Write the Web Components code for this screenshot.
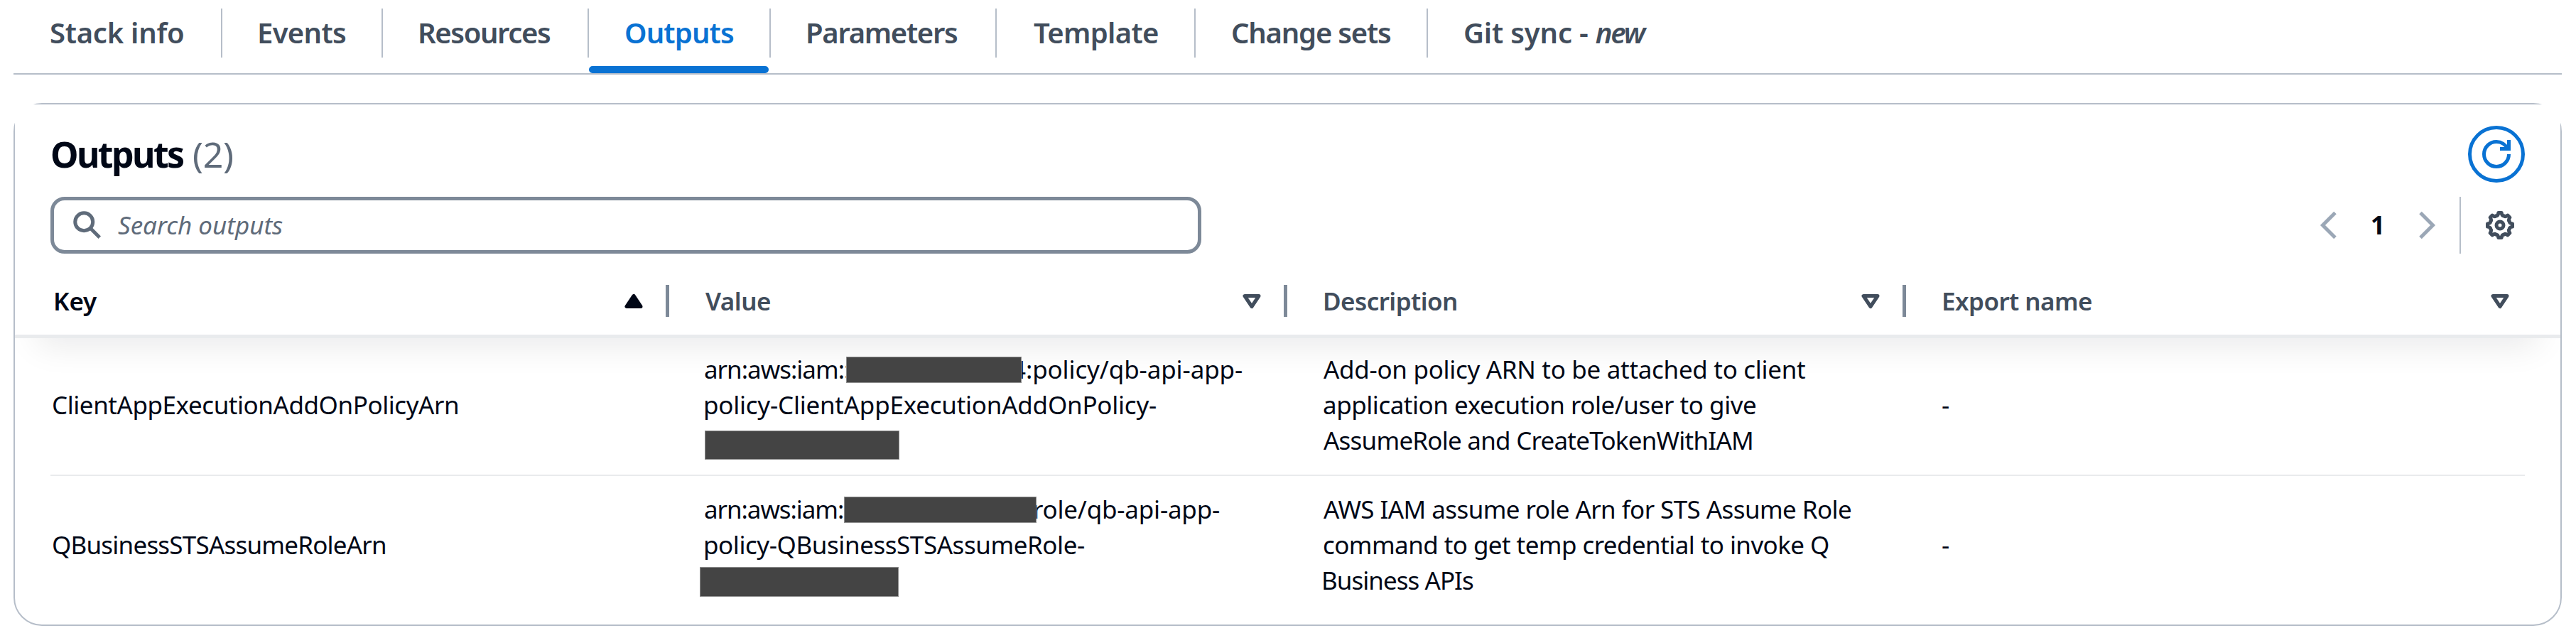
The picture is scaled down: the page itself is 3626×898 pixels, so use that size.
<!DOCTYPE html>
<html lang="en">
<head>
<meta charset="utf-8">
<title>Stack outputs</title>
<style>
html,body{margin:0;background:#fff;overflow:hidden}
body{width:3626px;height:898px;font-family:"Noto Sans","Open Sans",sans-serif;font-size:35px;font-weight:450;line-height:50px;color:#000716}
</style>
</head>
<body>
<cfn-tabs></cfn-tabs>
<outputs-panel></outputs-panel>
<script>
const ctx = document.createElement('canvas').getContext('2d');
const mount = (el, html) => { el.attachShadow({mode:'open'}).innerHTML = html; };

/* One line of text, tracked so that its ink spans the given width. */
customElements.define('ui-text', class extends HTMLElement {
  connectedCallback() {
    if (this.shadowRoot) return;
    mount(this, `<style>:host{display:block;white-space:pre}</style><span><slot></slot></span>`);
    const cs = getComputedStyle(this), s = this.textContent, want = +this.getAttribute('ink');
    ctx.font = `${cs.fontStyle} ${cs.fontWeight} ${cs.fontSize} ${cs.fontFamily}`;
    const m = ctx.measureText(s), ink = m.actualBoundingBoxLeft + m.actualBoundingBoxRight;
    const span = this.shadowRoot.querySelector('span');
    span.style.marginLeft = m.actualBoundingBoxLeft + 'px';
    if (want && s.length > 1) span.style.letterSpacing = (want - ink) / (s.length - 1) + 'px';
  }
});

/* Eight flat teeth joined by concave valleys. */
const gearPath = () => {
  const p = (deg, r) => { const a = deg * Math.PI / 180; return (8 + r * Math.sin(a)).toFixed(2) + ' ' + (8 - r * Math.cos(a)).toFixed(2); };
  let d = 'M' + p(-7, 7.05);
  for (let k = 0; k < 8; k++) d += 'L' + p(k * 45 + 7, 7.05) + 'Q' + p(k * 45 + 13, 5.3) + ' ' + p(k * 45 + 22.5, 5.75) + 'Q' + p(k * 45 + 32, 5.3) + ' ' + p(k * 45 + 38, 7.05);
  return d + 'z';
};
const ICONS = {
  refresh:'<path d="M15 0v5h-5M15 8c0 3.87-3.13 7-7 7s-7-3.13-7-7 3.13-7 7-7c2.79 0 5.2 1.63 6.33 4"/>',
  search:'<circle cx="6.1" cy="6.1" r="5"/><path d="m9.6 9.6 5.3 5.3"/>',
  left:'<path d="m12 1-7 7 7 7"/>',
  right:'<path d="m4 1 7 7-7 7"/>',
  down:'<path stroke-linejoin="round" d="M4 5h8l-4 6z"/>',
  up:'<path stroke-linejoin="round" fill="currentColor" d="M4 11h8L8 5z"/>',
  gear:'<circle cx="8" cy="8" r="2"/><path stroke-linejoin="round" d="' + gearPath() + '"/>'
};
customElements.define('ui-icon', class extends HTMLElement {
  connectedCallback() {
    if (this.shadowRoot) return;
    mount(this, `<style>:host{display:block;width:40px;height:40px;flex:none}svg{display:block;overflow:visible}</style>
    <svg width="40" height="40" viewBox="0 0 16 16" fill="none" stroke="currentColor" stroke-width="2">${ICONS[this.getAttribute('name')]}</svg>`);
  }
});

customElements.define('cfn-tab', class extends HTMLElement {
  connectedCallback() {
    mount(this, `<style>
    :host{display:block;height:91px;padding-top:12px;box-sizing:border-box;position:relative;color:#414d5c;font-weight:650;font-size:40px}
    .in{display:flex;height:69px;box-sizing:border-box;border-right:2px solid #b6bec9;padding:9px 0 0 52px}
    :host([last]) .in{border:0}
    :host([active]){color:#0972d3}
    :host([active])::after{content:"";position:absolute;left:0;right:3px;top:93px;height:10px;background:#0972d3;border-radius:5px}
    </style><div class="in"><slot></slot></div>`);
  }
});

customElements.define('cfn-tabs', class extends HTMLElement {
  connectedCallback() {
    mount(this, `<style>
    :host{display:flex;box-sizing:border-box;height:105px;margin:0 20px 0 19px;border-bottom:2px solid #b6bec9}
    .new{font-style:italic;margin-left:10px}
    </style>
    <cfn-tab style="width:294px"><ui-text ink="187">Stack info</ui-text></cfn-tab>
    <cfn-tab style="width:226px"><ui-text ink="121">Events</ui-text></cfn-tab>
    <cfn-tab style="width:290px"><ui-text ink="183">Resources</ui-text></cfn-tab>
    <cfn-tab style="width:256px" active><ui-text ink="151">Outputs</ui-text></cfn-tab>
    <cfn-tab style="width:318px"><ui-text ink="210">Parameters</ui-text></cfn-tab>
    <cfn-tab style="width:280px"><ui-text ink="175">Template</ui-text></cfn-tab>
    <cfn-tab style="width:327px"><ui-text ink="222">Change sets</ui-text></cfn-tab>
    <cfn-tab last><ui-text ink="173">Git sync -</ui-text><ui-text class="new" ink="73">new</ui-text></cfn-tab>`);
  }
});

customElements.define('search-field', class extends HTMLElement {
  connectedCallback() {
    mount(this, `<style>
    :host{display:flex;align-items:center;box-sizing:border-box;width:1620px;height:80px;border:5px solid #7d8998;border-radius:20px;padding-left:27px;color:#5f6b7a;font-style:italic}
    ui-text{margin:0 0 1px 23px}
    </style><ui-icon name="search"></ui-icon><ui-text ink="232">Search outputs</ui-text>`);
  }
});

customElements.define('refresh-button', class extends HTMLElement {
  connectedCallback() {
    mount(this, `<style>:host{display:flex;align-items:center;justify-content:center;box-sizing:border-box;width:80px;height:80px;border:5px solid #0972d3;border-radius:50%;color:#0972d3}</style><ui-icon name="refresh"></ui-icon>`);
  }
});

customElements.define('page-controls', class extends HTMLElement {
  connectedCallback() {
    mount(this, `<style>
    :host{display:flex;align-items:center;height:80px;color:#9ba7b6}
    .n{width:100px;color:#000716;font-weight:700}
    .n ui-text{margin:0 0 0 42px}
    .bar{width:2px;height:80px;background:#b6bec9;margin:0 35px 0 25px}
    .gear{color:#414d5c;margin-right:15px}
    </style><ui-icon name="left"></ui-icon><div class="n"><ui-text>1</ui-text></div><ui-icon name="right"></ui-icon><div class="bar"></div><ui-icon class="gear" name="gear"></ui-icon>`);
  }
});

customElements.define('column-head', class extends HTMLElement {
  connectedCallback() {
    mount(this, `<style>
    :host{display:flex;align-items:center;justify-content:space-between;height:45px;box-sizing:border-box;border-right:5px solid #7d8998;padding:0 25px 0 51px;color:#414d5c;font-weight:650}
    :host([sorted]){color:#000716;padding-left:7px}
    :host([last]){border:0;padding-right:14px}
    ui-icon{margin-top:1px}
    </style><slot></slot><ui-icon name="${this.hasAttribute('sorted')?'up':'down'}"></ui-icon>`);
  }
});

customElements.define('redacted-bar', class extends HTMLElement {
  connectedCallback() {
    mount(this, `<style>:host{display:block;position:absolute;box-sizing:border-box;background:#444;border:1px solid #8e8e8e}</style>`);
  }
});

customElements.define('output-row', class extends HTMLElement {
  connectedCallback() {
    mount(this, `<style>
    :host{display:grid;grid-template-columns:871px 871px 871px 870px;align-items:center;margin:0 50px;position:relative}
    ::slotted(div){padding-left:50px;position:relative}
    ::slotted(div:first-child){padding-left:4px}
    </style><slot></slot>`);
  }
});

customElements.define('outputs-panel', class extends HTMLElement {
  connectedCallback() {
    mount(this, `<style>
    :host{display:block;box-sizing:border-box;margin:40px 20px 0 19px;height:736px;border:2px solid #b6bec9;border-radius:40px}
    .head{position:relative;z-index:0;background:#fff;height:324px;border-bottom:5px solid #e9ebed;box-sizing:content-box}
    .title{display:flex;justify-content:space-between;padding:30px 50px 0 52px;height:80px;font-size:50px;line-height:80px}
    .title b{display:flex;font-weight:700}
    .count{color:#5f6b7a;font-weight:450}
    .tools{display:flex;justify-content:space-between;padding:20px 50px 0 50px}
    .cols{display:grid;grid-template-columns:871px 870px 871px 870px;padding:44px 0 0 50px}
    .body{position:relative}
    .shade{position:absolute;inset:0 0 auto 0;height:80px;overflow:hidden}
    .shade::before{content:"";position:absolute;left:32px;right:32px;top:-60px;height:60px;box-shadow:0 10px 48px rgba(0,7,22,.09)}
    .r1{height:192px;border-bottom:2px solid #e9ebed}
    .r2{height:204px}
    .r1>div{margin-top:-5px}
    .r2>div{margin-top:-11px}
    .line{display:flex}
    </style>
    <div class="head">
      <div class="title"><b><ui-text ink="185" style="width:200px">Outputs</ui-text><ui-text class="count" ink="54">(2)</ui-text></b><refresh-button></refresh-button></div>
      <div class="tools"><search-field></search-field><page-controls></page-controls></div>
      <div class="cols">
        <column-head sorted><ui-text ink="59">Key</ui-text></column-head>
        <column-head><ui-text ink="91">Value</ui-text></column-head>
        <column-head style="padding-left:53px"><ui-text ink="185">Description</ui-text></column-head>
        <column-head last style="padding-left:53px"><ui-text ink="208">Export name</ui-text></column-head>
      </div>
    </div>
    <div class="body"><div class="shade"></div>
      <output-row class="r1">
        <div><ui-text ink="569">ClientAppExecutionAddOnPolicyArn</ui-text></div>
        <div>
          <div class="line"><ui-text ink="203" style="width:432px">arn:aws:iam::</ui-text><ui-text ink="324">4:policy/qb-api-app-</ui-text></div>
          <ui-text ink="635">policy-ClientAppExecutionAddOnPolicy-</ui-text>
          <div style="height:50px"></div>
          <redacted-bar style="left:249px;top:7px;width:247px;height:37px"></redacted-bar>
          <redacted-bar style="left:50px;top:111px;width:274px;height:41px"></redacted-bar>
        </div>
        <div><ui-text ink="678">Add-on policy ARN to be attached to client</ui-text><ui-text ink="608">application execution role/user to give</ui-text><ui-text ink="603">AssumeRole and CreateTokenWithIAM</ui-text></div>
        <div><ui-text>-</ui-text></div>
      </output-row>
      <output-row class="r2">
        <div><ui-text ink="467">QBusinessSTSAssumeRoleArn</ui-text></div>
        <div>
          <div class="line"><ui-text ink="194" style="width:464px">arn:aws:iam:</ui-text><ui-text ink="260">role/qb-api-app-</ui-text></div>
          <ui-text ink="534">policy-QBusinessSTSAssumeRole-</ui-text>
          <div style="height:50px"></div>
          <redacted-bar style="left:246px;top:7px;width:271px;height:37px"></redacted-bar>
          <redacted-bar style="left:43px;top:106px;width:280px;height:42px"></redacted-bar>
        </div>
        <div><ui-text ink="742">AWS IAM assume role Arn for STS Assume Role</ui-text><ui-text ink="711">command to get temp credential to invoke Q</ui-text><ui-text ink="211">Business APIs</ui-text></div>
        <div><ui-text>-</ui-text></div>
      </output-row>
    </div>`);
  }
});
</script>
</body>
</html>
